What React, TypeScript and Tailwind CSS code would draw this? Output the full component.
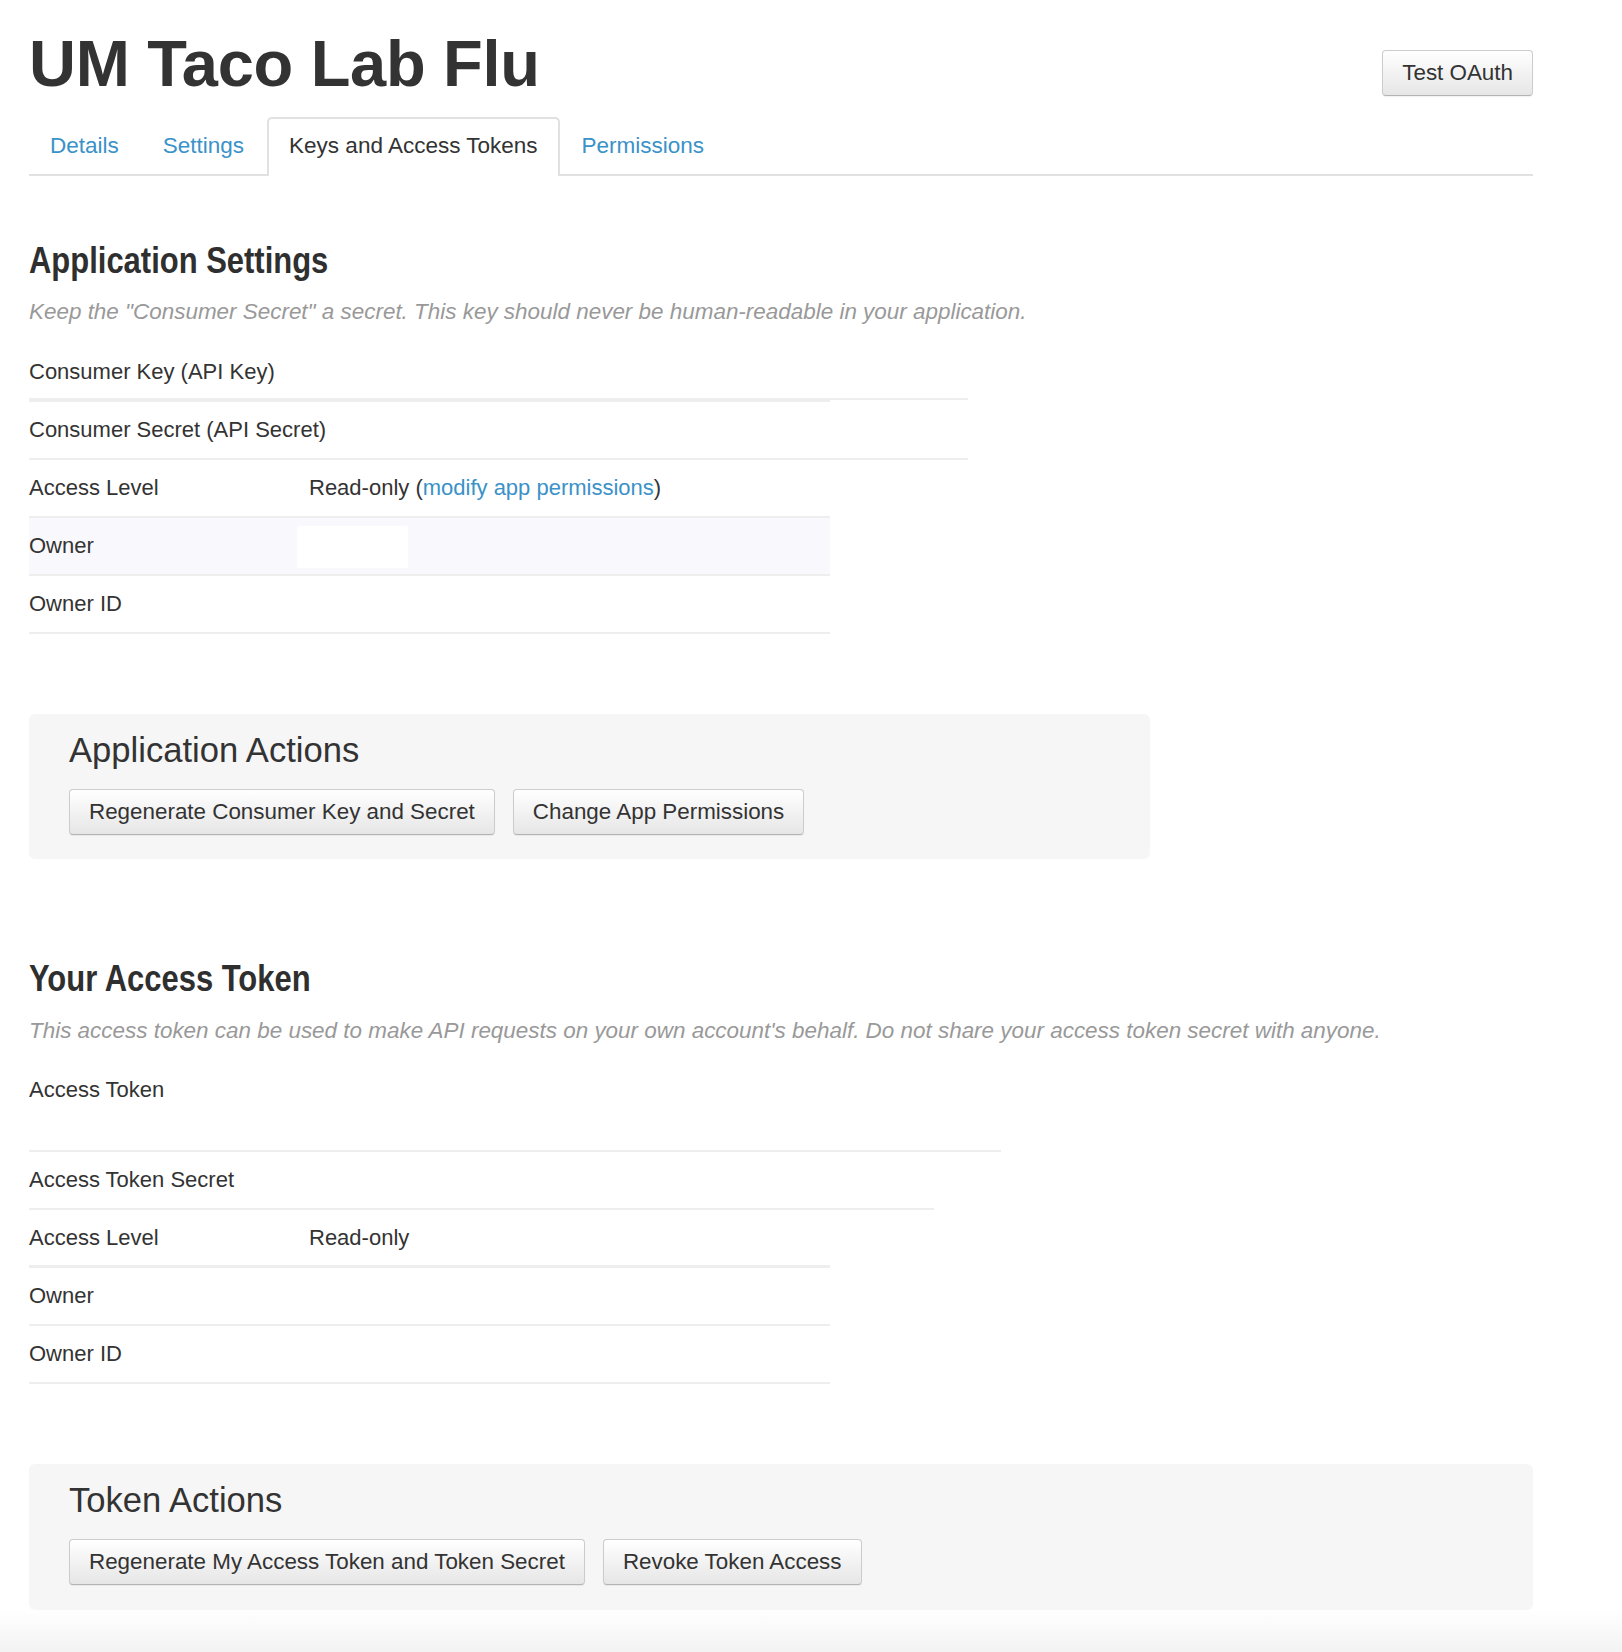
import React from "react";

function Btn({ children }: { children: React.ReactNode }) {
  return (
    <button
      type="button"
      className="h-[46px] whitespace-nowrap rounded-[4px] border border-[#cccccc] border-b-[#b3b3b3] bg-linear-to-b from-white to-[#e6e6e6] px-[19px] text-[22.4px] leading-[30px] text-[#333333] shadow-[0_1px_1px_rgba(0,0,0,0.06)]"
    >
      {children}
    </button>
  );
}

function Line({ w, h = 2 }: { w: number; h?: number }) {
  return <div className="bg-[#eeeeee]" style={{ width: w, height: h }} />;
}

function Row({
  label,
  value,
  lines,
  pb = 13,
  minH = 30,
  bg,
  redact,
}: {
  label: string;
  value?: React.ReactNode;
  lines: { w: number; h?: number }[];
  pb?: number;
  minH?: number;
  bg?: boolean;
  redact?: boolean;
}) {
  return (
    <div>
      <div
        className={
          "relative flex w-[801px] pt-[13px] leading-[30px] " +
          (bg ? "bg-[#f9f9fd]" : "")
        }
        style={{ paddingBottom: pb }}
      >
        <div className="w-[280px] shrink-0 whitespace-nowrap">{label}</div>
        <div style={{ minHeight: minH }} className="whitespace-nowrap">
          {value}
        </div>
        {redact && (
          <div className="absolute left-[268px] top-[8px] h-[42px] w-[111px] rounded-[2px] bg-white" />
        )}
      </div>
      {lines.map((l, i) => (
        <Line key={i} w={l.w} h={l.h} />
      ))}
    </div>
  );
}

function SectionHeading({
  children,
  mt,
}: {
  children: React.ReactNode;
  mt: string;
}) {
  return (
    <h2
      className={
        mt +
        " h-[44px] whitespace-nowrap text-[36px] font-bold leading-[44px] text-[#2f2f2f]"
      }
    >
      <span className="inline-block origin-left scale-x-[0.86]">{children}</span>
    </h2>
  );
}

export default function App() {
  return (
    <div className="min-h-[1652px] bg-white font-['Liberation_Sans',Arial,sans-serif] text-[22px] text-[#333333]">
      <div className="pl-[29px]">
        <div className="w-[1504px]">
          {/* Header */}
          <div className="flex items-start justify-between pt-[31px]">
            <h1 className="text-[65px] font-bold leading-[65px] tracking-[-0.3px] text-[#333333]">
              UM Taco Lab Flu
            </h1>
            <div className="mt-[19px]">
              <Btn>Test OAuth</Btn>
            </div>
          </div>

          {/* Tabs */}
          <div className="mt-[21px] flex items-end border-b-2 border-[#e1e1e1] text-[22.5px]">
            <a className="px-[21px] pt-[14px] pb-[13px] leading-[30px] text-[#3a92c8]">
              Details
            </a>
            <a className="px-[23px] pt-[14px] pb-[13px] leading-[30px] text-[#3a92c8]">
              Settings
            </a>
            <a className="-mb-[2px] rounded-t-[5px] border-2 border-b-0 border-[#e1e1e1] bg-white px-[20px] pt-[12px] pb-[15px] leading-[30px] text-[#333333]">
              Keys and Access Tokens
            </a>
            <a className="px-[22px] pt-[14px] pb-[13px] leading-[30px] text-[#3a92c8]">
              Permissions
            </a>
          </div>

          {/* Application Settings */}
          <SectionHeading mt="mt-[63px]">Application Settings</SectionHeading>
          <p className="mt-[14px] text-[22.45px] italic leading-[30px] text-[#999999]">
            Keep the "Consumer Secret" a secret. This key should never be
            human-readable in your application.
          </p>

          <div className="mt-[17px]">
            <Row
              label="Consumer Key (API Key)"
              pb={11}
              lines={[{ w: 939 }, { w: 801 }]}
            />
            <Row label="Consumer Secret (API Secret)" lines={[{ w: 939 }]} />
            <Row
              label="Access Level"
              value={
                <span>
                  Read-only (
                  <a className="text-[#3a92c8]">modify app permissions</a>)
                </span>
              }
              lines={[{ w: 801 }]}
            />
            <Row label="Owner" bg redact lines={[{ w: 801 }]} />
            <Row label="Owner ID" lines={[{ w: 801 }]} />
          </div>

          {/* Application Actions */}
          <div className="mt-[80px] w-[1121px] rounded-[6px] bg-[#f6f6f6] pl-[40px] pt-[16px] pb-[24px]">
            <h3 className="text-[34.6px] leading-[40px] text-[#333333]">
              Application Actions
            </h3>
            <div className="mt-[19px] flex gap-[18px]">
              <Btn>Regenerate Consumer Key and Secret</Btn>
              <Btn>Change App Permissions</Btn>
            </div>
          </div>

          {/* Your Access Token */}
          <SectionHeading mt="mt-[98px]">Your Access Token</SectionHeading>
          <p className="mt-[15px] text-[22.45px] italic leading-[30px] text-[#999999]">
            This access token can be used to make API requests on your own
            account's behalf. Do not share your access token secret with anyone.
          </p>

          <div className="mt-[16px]">
            <Row label="Access Token" minH={62} lines={[{ w: 972 }]} />
            <Row label="Access Token Secret" lines={[{ w: 905 }]} />
            <Row
              label="Access Level"
              value="Read-only"
              pb={12}
              lines={[{ w: 801, h: 3 }]}
            />
            <Row label="Owner" lines={[{ w: 801 }]} />
            <Row label="Owner ID" lines={[{ w: 801 }]} />
          </div>

          {/* Token Actions */}
          <div className="mt-[80px] w-[1504px] rounded-[6px] bg-[#f6f6f6] pl-[40px] pt-[16px] pb-[25px]">
            <h3 className="text-[34.6px] leading-[40px] text-[#333333]">
              Token Actions
            </h3>
            <div className="mt-[19px] flex gap-[18px]">
              <Btn>Regenerate My Access Token and Token Secret</Btn>
              <Btn>Revoke Token Access</Btn>
            </div>
          </div>
        </div>
      </div>
      <div className="h-[44px] w-full bg-linear-to-b from-white to-[#f2f2f2]" />
    </div>
  );
}
